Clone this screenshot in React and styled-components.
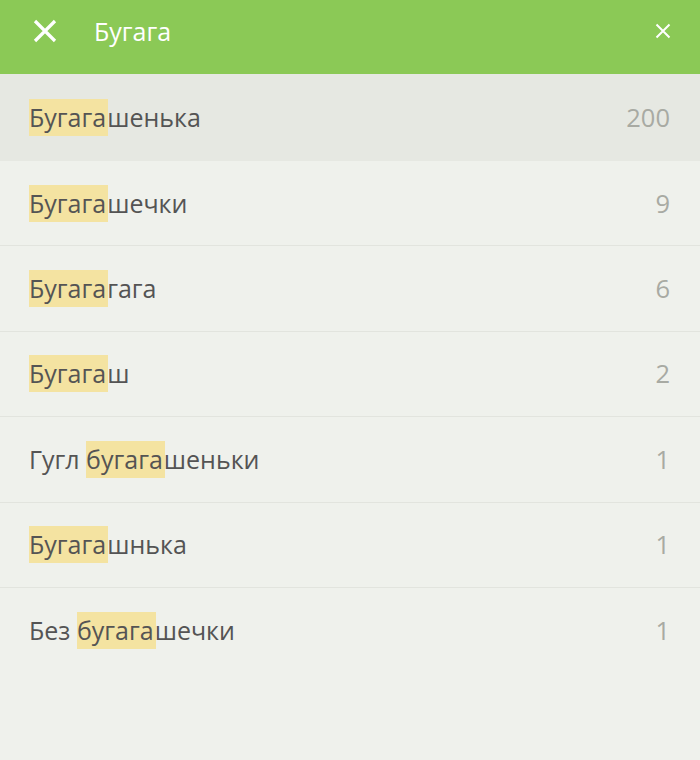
import React from "react";
import styled, { createGlobalStyle } from "styled-components";

const GlobalStyle = createGlobalStyle`
  html, body {
    margin: 0;
    padding: 0;
    background: #eff1ec;
    font-family: "Open Sans", "Noto Sans", sans-serif;
  }
`;

const query = "бугага";

const items = [
  { title: "Бугагашенька", count: 200, active: true },
  { title: "Бугагашечки", count: 9 },
  { title: "Бугагагага", count: 6 },
  { title: "Бугагаш", count: 2 },
  { title: "Гугл бугагашеньки", count: 1 },
  { title: "Бугагашнька", count: 1 },
  { title: "Без бугагашечки", count: 1 },
];

function highlight(text) {
  const i = text.toLowerCase().indexOf(query);
  if (i < 0) return text;
  return (
    <>
      {text.slice(0, i)}
      <S.Mark>{text.slice(i, i + query.length)}</S.Mark>
      {text.slice(i + query.length)}
    </>
  );
}

export default function App() {
  return (
    <>
      <GlobalStyle />
      <S.Page>
        <S.Header>
          <S.IconButton>
            <svg width="24" height="24" viewBox="0 0 24 24">
              <path
                d="M2 2 L22 22 M22 2 L2 22"
                stroke="#fff"
                strokeWidth="3.2"
                fill="none"
              />
            </svg>
          </S.IconButton>
          <S.Title>Бугага</S.Title>
          <S.Clear>
            <svg width="16" height="16" viewBox="0 0 16 16">
              <path
                d="M1.5 1.5 L14.5 14.5 M14.5 1.5 L1.5 14.5"
                stroke="#fff"
                strokeWidth="2"
                fill="none"
              />
            </svg>
          </S.Clear>
        </S.Header>
        <S.List>
          {items.map((it, i) => (
            <S.Row key={i} active={it.active} last={i === items.length - 1}>
              <S.Label>{highlight(it.title)}</S.Label>
              <S.Count>{it.count}</S.Count>
            </S.Row>
          ))}
        </S.List>
      </S.Page>
    </>
  );
}

const S = {};

S.Page = styled.div`
  width: 700px;
  min-height: 760px;
  background: #eff1ec;
`;

S.Header = styled.div`
  height: 74px;
  background: #8bc956;
  display: flex;
  align-items: center;
  padding: 0 28px 13px 32px;
  box-sizing: border-box;
`;

S.IconButton = styled.div`
  width: 26px;
  height: 26px;
  display: flex;
  align-items: center;
  justify-content: center;
  margin-right: 36px;
`;

S.Title = styled.div`
  flex: 1;
  color: #fff;
  font-size: 25px;
  line-height: 30px;
  margin-top: 1px;
`;

S.Clear = styled.div`
  width: 18px;
  height: 18px;
  display: flex;
  align-items: center;
  justify-content: center;
`;

S.List = styled.div`
  display: flex;
  flex-direction: column;
`;

S.Row = styled.div`
  height: ${(p) => (p.active ? "86px" : "84.4px")};
  display: flex;
  align-items: center;
  justify-content: space-between;
  padding: 0 30px 0 29px;
  background: ${(p) => (p.active ? "#e6e8e2" : "#eff1ec")};
  border-bottom: 1px solid
    ${(p) => (p.active || p.last ? (p.active ? "#e6e8e2" : "#eff1ec") : "#e2e4de")};
`;

S.Label = styled.div`
  color: #545454;
  font-size: 25px;
  line-height: 37px;
`;

S.Mark = styled.span`
  background: #f4e3a1;
  display: inline-block;
  line-height: 37px;
  padding-right: 2px;
  margin-right: -1px;
`;

S.Count = styled.div`
  color: #a8aaa3;
  font-size: 25.5px;
  line-height: 37px;
`;
